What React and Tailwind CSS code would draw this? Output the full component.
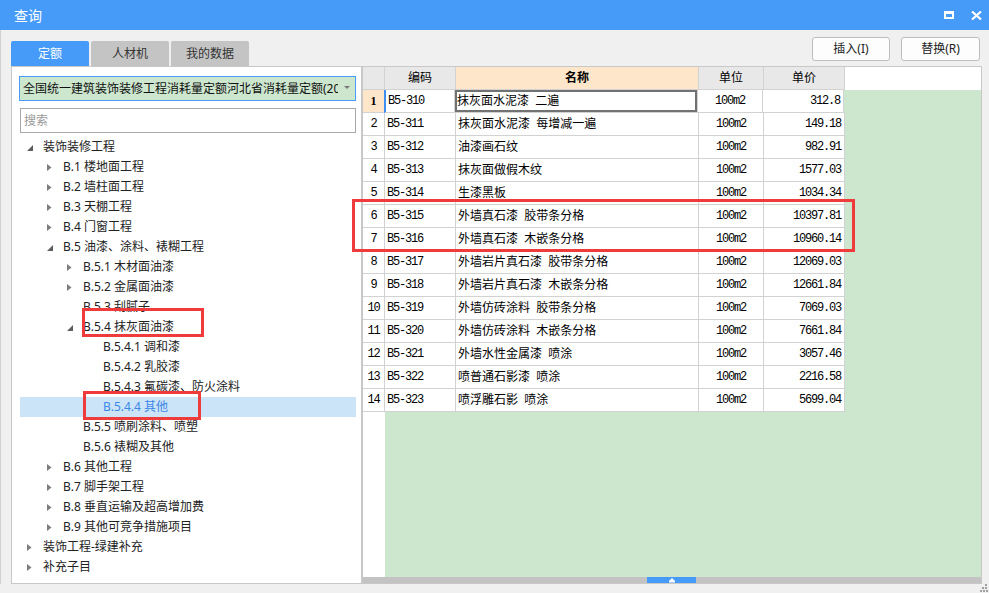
import React from "react";

const TREE = [
  { l: 0, t: "装饰装修工程", s: "open" },
  { l: 1, t: "B.1 楼地面工程", s: "closed" },
  { l: 1, t: "B.2 墙柱面工程", s: "closed" },
  { l: 1, t: "B.3 天棚工程", s: "closed" },
  { l: 1, t: "B.4 门窗工程", s: "closed" },
  { l: 1, t: "B.5 油漆、涂料、裱糊工程", s: "open" },
  { l: 2, t: "B.5.1 木材面油漆", s: "closed" },
  { l: 2, t: "B.5.2 金属面油漆", s: "closed" },
  { l: 2, t: "B.5.3 刮腻子" },
  { l: 2, t: "B.5.4 抹灰面油漆", s: "open" },
  { l: 3, t: "B.5.4.1 调和漆" },
  { l: 3, t: "B.5.4.2 乳胶漆" },
  { l: 3, t: "B.5.4.3 氟碳漆、防火涂料" },
  { l: 3, t: "B.5.4.4 其他", sel: true },
  { l: 2, t: "B.5.5 喷刷涂料、喷塑" },
  { l: 2, t: "B.5.6 裱糊及其他" },
  { l: 1, t: "B.6 其他工程", s: "closed" },
  { l: 1, t: "B.7 脚手架工程", s: "closed" },
  { l: 1, t: "B.8 垂直运输及超高增加费", s: "closed" },
  { l: 1, t: "B.9 其他可竞争措施项目", s: "closed" },
  { l: 0, t: "装饰工程-绿建补充", s: "closed" },
  { l: 0, t: "补充子目", s: "closed" },
];

const PAD = ["pl-[4px]", "pl-[24px]", "pl-[44px]", "pl-[64px]"];

const ROWS = [
  ["B5-310", "抹灰面水泥漆  二遍", "312.8"],
  ["B5-311", "抹灰面水泥漆  每增减一遍", "149.18"],
  ["B5-312", "油漆画石纹", "982.91"],
  ["B5-313", "抹灰面做假木纹", "1577.03"],
  ["B5-314", "生漆黑板", "1034.34"],
  ["B5-315", "外墙真石漆  胶带条分格", "10397.81"],
  ["B5-316", "外墙真石漆  木嵌条分格", "10960.14"],
  ["B5-317", "外墙岩片真石漆  胶带条分格", "12069.03"],
  ["B5-318", "外墙岩片真石漆  木嵌条分格", "12661.84"],
  ["B5-319", "外墙仿砖涂料  胶带条分格", "7069.03"],
  ["B5-320", "外墙仿砖涂料  木嵌条分格", "7661.84"],
  ["B5-321", "外墙水性金属漆  喷涂", "3057.46"],
  ["B5-322", "喷普通石影漆  喷涂", "2216.58"],
  ["B5-323", "喷浮雕石影  喷涂", "5699.04"],
];

const mono = "font-['Liberation_Mono',monospace] text-[12px] tracking-[-1.2px]";

function Arrow({ state }) {
  return (
    <svg width="19" height="20" className="shrink-0">
      {state === "open" && <polygon points="3,14 9,8 9,14" fill="#5e5e5e" />}
      {state === "closed" && <polygon points="3,7 7.5,10.5 3,14" fill="#7d7d7d" />}
    </svg>
  );
}

function TreeRow({ item }) {
  return (
    <div
      className={`h-[20px] flex items-center ${PAD[item.l]} ${
        item.sel ? "bg-[#cce4f8] text-[#3b87e6]" : "text-[#222]"
      }`}
    >
      <Arrow state={item.s} />
      <span className="whitespace-pre leading-none">{item.t}</span>
    </div>
  );
}

export default function App() {
  return (
    <div className="w-[989px] h-[593px] bg-[#f0f0f0] relative overflow-hidden text-[12px] font-['Noto_Sans','Noto_Sans_CJK_SC',sans-serif]">
      {/* title bar */}
      <div className="h-[30px] bg-[#469bf8] flex items-center pl-[14px] pr-[7px] text-white text-[14px]">
        <span>查询</span>
        <div className="ml-auto flex items-center gap-[17px]">
          <div className="w-[10px] h-[8px] border-white border-t-[3px] border-x-[2px] border-b-[2px]"></div>
          <svg width="11" height="9" viewBox="0 0 11 9">
            <path d="M1 0.5 L10 8.5 M10 0.5 L1 8.5" stroke="white" strokeWidth="2.2" />
          </svg>
        </div>
      </div>

      <div className="flex h-[554px] pl-[11px] border-l border-[#d0d0d0]">
        {/* left column */}
        <div className="w-[351px] flex flex-col pt-[11px] -ml-px">
          <div className="h-[25px] flex gap-[2px]">
            <div className="w-[78px] bg-[#469bf8] text-white rounded-t-[2px] flex items-center justify-center">定额</div>
            <div className="w-[78px] bg-[#c4c4c4] text-[#333] rounded-t-[2px] flex items-center justify-center">人材机</div>
            <div className="w-[78px] bg-[#c4c4c4] text-[#333] rounded-t-[2px] flex items-center justify-center">我的数据</div>
          </div>
          <div className="flex-1 bg-white border border-[#c8c8c8] flex flex-col">
            <div className="mt-[9px] ml-[7px] w-[337px] h-[25px] bg-[#cde7cf] border border-[#4a9bf6] flex items-center">
              <span className="pl-[3px] w-[318px] overflow-hidden whitespace-nowrap text-[#111]">
                全国统一建筑装饰装修工程消耗量定额河北省消耗量定额(2012)
              </span>
              <svg width="8" height="5" className="ml-[6px]">
                <polygon points="0,0 6,0 3,3" fill="#7a7a7a" />
              </svg>
            </div>
            <div className="mt-[7px] ml-[8px] w-[336px] h-[25px] border border-[#a9a9a9] flex items-center pl-[3px] text-[#9a9a9a]">
              搜索
            </div>
            <div className="mt-[4px] ml-[8px] w-[336px] flex flex-col">
              {TREE.map((it, i) => (
                <TreeRow key={i} item={it} />
              ))}
            </div>
          </div>
        </div>

        {/* right column */}
        <div className="w-[620px] flex flex-col pt-[7px]">
          <div className="h-[24px] flex justify-end gap-[11px] pr-[2px]">
            <div className="w-[78px] bg-[#fdfdfd] border border-[#bdbdbd] rounded-[3px] flex items-center justify-center text-[#222]">插入(I)</div>
            <div className="w-[79px] bg-[#fdfdfd] border border-[#bdbdbd] rounded-[3px] flex items-center justify-center text-[#222]">替换(R)</div>
          </div>
          <div className="mt-[5px] flex-1 border border-[#c8c8c8] flex flex-col bg-white">
            {/* header */}
            <div className="h-[23px] flex shrink-0">
              <div className="w-[22px] bg-[#e8e8e8] border-r border-b border-[#d2d2d2]"></div>
              <div className="w-[71px] bg-[#e8e8e8] border-r border-b border-[#d2d2d2] flex items-center justify-center">编码</div>
              <div className="w-[243px] bg-[#fde6c9] border-r border-b border-[#d2d2d2] flex items-center justify-center font-bold">名称</div>
              <div className="w-[65px] bg-[#e8e8e8] border-r border-b border-[#d2d2d2] flex items-center justify-center">单位</div>
              <div className="w-[81px] bg-[#e8e8e8] border-r border-b border-[#d2d2d2] flex items-center justify-center">单价</div>
              <div className="flex-1 bg-white"></div>
            </div>
            {ROWS.map((r, i) => (
              <div key={i} className="h-[23px] flex shrink-0">
                <div
                  className={`w-[22px] border-r border-b border-[#d2d2d2] flex items-center justify-center ${mono} ${
                    i === 0 ? "bg-[#fde6c9] font-bold font-['Liberation_Serif',serif] tracking-normal" : ""
                  }`}
                >
                  {i + 1}
                </div>
                <div
                  className={`w-[71px] border-r border-b border-[#d2d2d2] flex items-center pl-[2px] ${mono} ${
                    i === 0 ? "border-l-2 border-l-[#3f8ff0] -ml-[1px]" : ""
                  }`}
                >
                  {r[0]}
                </div>
                <div
                  className={`w-[243px] border-r border-b border-[#d2d2d2] flex items-center pl-[2px] whitespace-pre ${
                    i === 0 ? "shadow-[inset_0_0_0_2px_#727272]" : ""
                  }`}
                >
                  {r[1]}
                </div>
                <div className={`w-[65px] border-r border-b border-[#d2d2d2] flex items-center justify-center ${mono}`}>100m2</div>
                <div className={`w-[81px] border-r border-b border-[#d2d2d2] flex items-center justify-end pr-[3px] ${mono}`}>{r[2]}</div>
                <div className="flex-1 bg-[#cde7cf]"></div>
              </div>
            ))}
            <div className="flex-1 flex">
              <div className="w-[22px] bg-white"></div>
              <div className="flex-1 bg-[#cde7cf]"></div>
            </div>
            <div className="h-[6px] bg-[#c3c3c3] flex shrink-0">
              <div className="ml-[284px] w-[49px] bg-[#469bf8] flex items-center justify-center">
                <svg width="6" height="5">
                  <polygon points="3,0 6,3 0,3" fill="white" />
                  <rect x="0" y="3" width="6" height="1.5" fill="white" />
                </svg>
              </div>
            </div>
          </div>
        </div>
      </div>

      {/* annotation boxes */}
      <div className="absolute left-[82px] top-[308px] w-[122px] h-[29px] border-[3px] border-[#ef3b3b]"></div>
      <div className="absolute left-[83px] top-[391px] w-[118px] h-[29px] border-[3px] border-[#ef3b3b]"></div>
      <div className="absolute left-[352px] top-[199px] w-[503px] h-[53px] border-[3px] border-[#ef3b3b]"></div>

      {/* resize grip */}
      <svg width="8" height="8" className="absolute right-[1px] bottom-[1px]">
        <rect x="5" y="0" width="2" height="2" fill="#a0a0a0" />
        <rect x="2" y="3" width="2" height="2" fill="#a0a0a0" />
        <rect x="5" y="3" width="2" height="2" fill="#a0a0a0" />
        <rect x="0" y="6" width="2" height="2" fill="#a0a0a0" />
        <rect x="3" y="6" width="2" height="2" fill="#a0a0a0" />
        <rect x="6" y="6" width="2" height="2" fill="#a0a0a0" />
      </svg>
    </div>
  );
}
